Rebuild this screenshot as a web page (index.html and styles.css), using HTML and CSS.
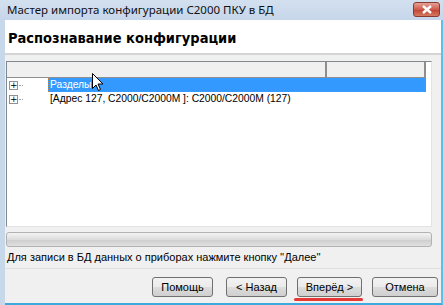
FILE: index.html
```html
<!DOCTYPE html>
<html lang="ru">
<head>
<meta charset="UTF-8">
<title>Мастер импорта конфигурации С2000 ПКУ в БД</title>
<link rel="stylesheet" href="styles.css">
</head>
<body>

<div class="window">
  <div class="titlebar">
    <span class="title">Мастер импорта конфигурации С2000 ПКУ в БД</span>
    <span class="close-btn">
      <svg width="12" height="9" viewBox="0 0 12 9"><path d="M2 1 L10 8 M10 1 L2 8" stroke="#fff" stroke-width="2.4"/></svg>
    </span>
  </div>

  <div class="frame">
    <!-- Wizard page header -->
    <div class="page-header">
      <h1>Распознавание конфигурации</h1>
    </div>

    <div class="page-body">
      <div class="tree-view">
        <div class="tree-head">
          <div class="col col-main"></div>
          <div class="col col-extra"></div>
        </div>
        <div class="tree-row selected">
          <span class="expander"><span class="box">+</span></span>
          <span class="label">Разделы</span>
        </div>
        <div class="tree-row">
          <span class="expander"><span class="box">+</span></span>
          <span class="label">[Адрес 127, С2000/С2000М ]: С2000/С2000М (127)</span>
        </div>
      </div>

      <div class="progress"></div>
      <p class="hint">Для записи в БД данных о приборах нажмите кнопку ''Далее''</p>
    </div>

    <div class="buttons">
      <button class="btn">Помощь</button>
      <button class="btn btn-back">&lt; Назад</button>
      <button class="btn btn-next">Вперёд &gt;</button>
      <button class="btn btn-cancel">Отмена</button>
    </div>
  </div>

  <svg class="cursor" width="12" height="19" viewBox="0 0 12 19">
    <path d="M0.5 0.5 L0.5 15.5 L4 12 L6.5 17.5 L8.5 16.5 L6 11 L11 11 Z" fill="#fff" stroke="#000" stroke-width="1"/>
  </svg>
</div>

</body>
</html>
```

FILE: styles.css
```css
/* General styles */
body {
  margin: 0;
  padding: 0;
  background-color: #fff;
  font-family: 'Liberation Sans', Arial, sans-serif;
}

.window {
  position: relative;
  width: 443px;
  height: 305px;
  background-color: #c8d8eb;
  overflow: hidden;
}

/* Title bar */
.titlebar {
  height: 20px;
  display: flex;
  align-items: center;
  justify-content: space-between;
  padding: 0 3px 0 7px;
  background: linear-gradient(#d3e0ef, #c6d6ea);
}

.title {
  font-family: 'Noto Sans', sans-serif;
  font-size: 11.5px;
  color: #111;
  margin-top: -1px;
}

.close-btn {
  width: 27px;
  height: 15px;
  margin-top: -2px;
  border: 1px solid #8a3a32;
  border-radius: 3px;
  background: linear-gradient(#e6a197, #cf5a4c 50%, #c1402f 51%, #d37a60);
  display: flex;
  align-items: center;
  justify-content: center;
  box-sizing: border-box;
}

/* Window body */
.frame {
  height: 283px;
  margin-left: 5px;
  border-right: 2px solid #58c1f1;
  border-bottom: 2px solid #3ea9df;
  background-color: #f0f0f0;
  display: flex;
  flex-direction: column;
}

.page-header {
  height: 30px;
  background-color: #fff;
  border-bottom: 2px solid #d5d5d5;
  display: flex;
  align-items: center;
  padding: 3px 0 0 3px;
}

.page-header h1 {
  margin: 0;
  font-family: 'DejaVu Sans Condensed', 'DejaVu Sans', sans-serif;
  font-size: 14.5px;
  font-weight: bold;
  color: #000;
}

.page-body {
  padding: 6px 9px 0 1px;
}

/* Tree view */
.tree-view {
  height: 164px;
  background-color: #fff;
  border: 1px solid #828790;
  border-right-color: #e3e3e3;
  border-bottom-color: #e3e3e3;
  font-size: 10.3px;
}

.tree-head {
  display: flex;
  height: 15px;
  margin-right: 5px;
  border-bottom: 1px solid #8e8e8e;
  background-color: #f0f0f0;
}

.col {
  border-right: 2px solid #8e8e8e;
}

.col-main {
  width: 318px;
}

.col-extra {
  flex: 1;
}

.tree-row {
  position: relative;
  height: 14px;
  display: flex;
  align-items: center;
}

.tree-row.selected .label {
  background-color: #3399ff;
  color: #fff;
  outline: 1px dotted #c08040;
  outline-offset: -1px;
  flex: 1;
  margin-right: 5px;
}

.expander {
  width: 39px;
  display: flex;
  align-items: center;
  padding-left: 2px;
}

.expander::after {
  content: '';
  width: 4px;
  border-top: 1px dotted #a0a0a0;
  margin-left: 1px;
}

.box {
  width: 7px;
  height: 7px;
  border: 1px solid #919191;
  font-size: 9px;
  line-height: 6px;
  text-align: center;
  color: #000;
  font-family: 'DejaVu Sans', sans-serif;
}

.label {
  padding: 0 2px;
  height: 14px;
  line-height: 14px;
  color: #000;
}

/* Progress and hint */
.progress {
  height: 13px;
  margin-top: 5px;
  border: 1px solid #b2b2b2;
  border-radius: 3px;
  background: linear-gradient(#f4f4f4, #dcdcdc 50%, #cdcdcd 51%, #e0e0e0);
}

.hint {
  margin: 4px 0 0 1px;
  font-size: 11px;
  line-height: 13px;
  color: #000;
}

/* Buttons */
.buttons {
  margin-top: auto;
  height: 35px;
  border-top: 1px solid #dfdfdf;
  display: flex;
  justify-content: flex-end;
  align-items: flex-start;
  padding: 8px 3px 0 0;
  box-sizing: border-box;
}

.btn {
  width: 61px;
  height: 20px;
  margin-left: 10px;
  border: 1px solid #707070;
  border-radius: 3px;
  background: linear-gradient(#f2f2f2, #ebebeb 50%, #dddddd 51%, #cfcfcf);
  font-family: 'Liberation Sans', Arial, sans-serif;
  font-size: 11px;
  color: #000;
  padding: 0;
}

.btn-back {
  margin-left: 13px;
}

.btn-next {
  position: relative;
  width: 65px;
}

.btn-cancel {
  width: 66px;
}

.btn-next::after {
  content: '';
  position: absolute;
  left: -4px;
  right: -2px;
  bottom: -5px;
  height: 3px;
  border-radius: 2px;
  background-color: #e53935;
}

/* Mouse pointer over the tree */
.cursor {
  position: absolute;
  left: 92px;
  top: 73px;
}
```
